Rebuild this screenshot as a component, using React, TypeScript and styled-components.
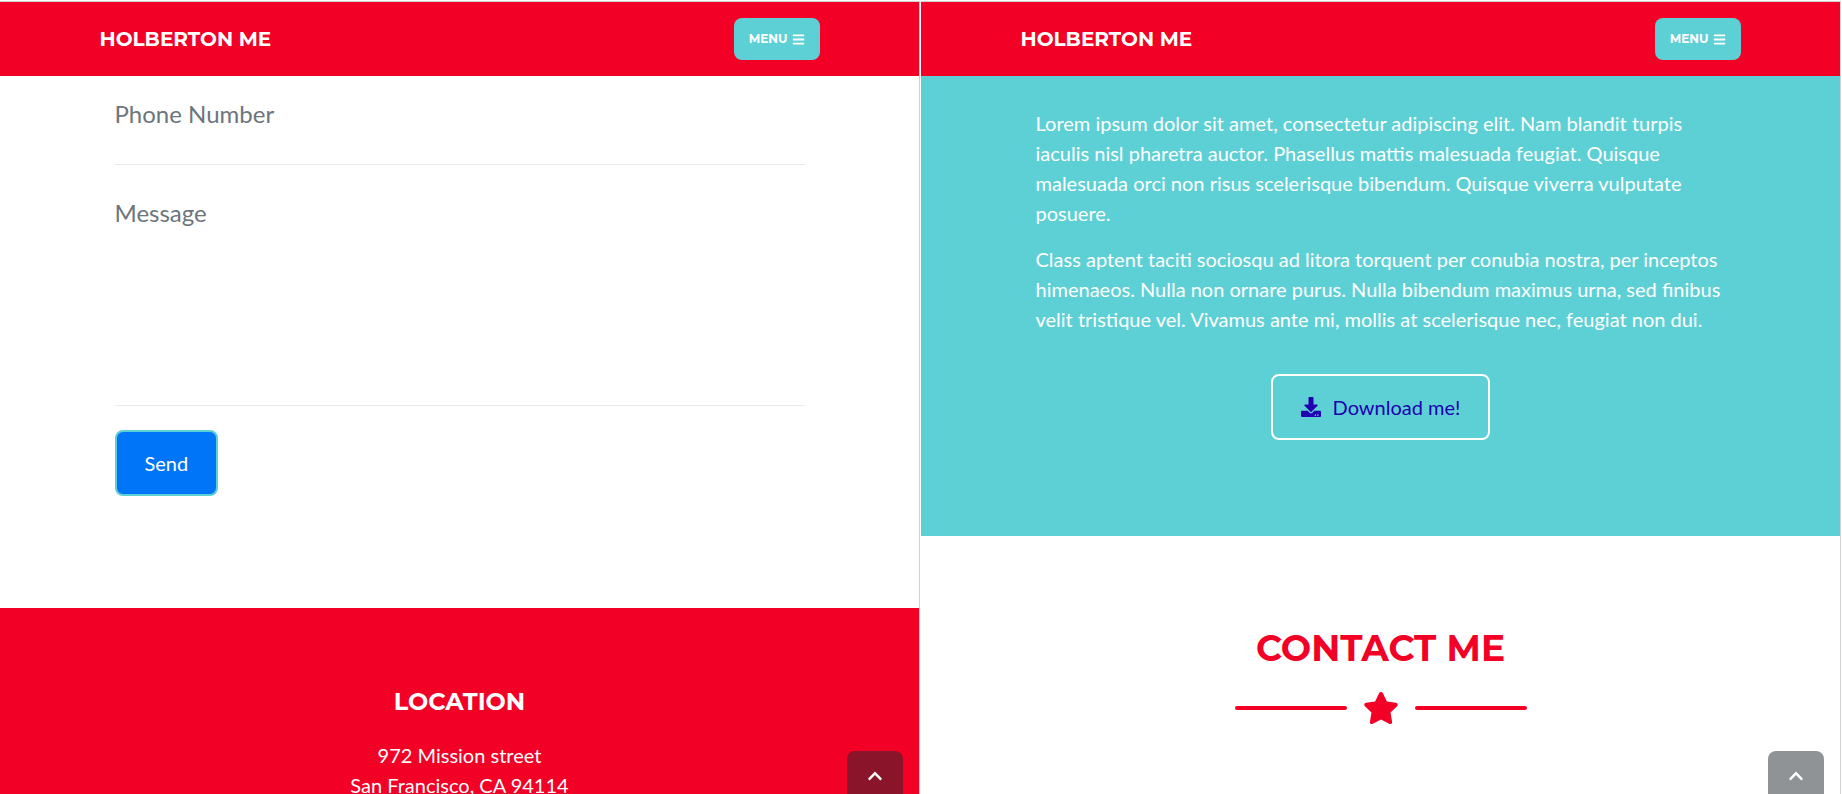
import React from 'react';
import styled, { createGlobalStyle, css } from 'styled-components';
import { FaBars, FaChevronUp, FaDownload, FaStar } from 'react-icons/fa';

const red = '#f20026';
const teal = '#5dd0d6';
const edge = '#cfd3d6';
const heading = "Montserrat, Inter, 'Liberation Sans', sans-serif";
const body = "Lato, 'Liberation Sans', sans-serif";

const GlobalStyle = createGlobalStyle`
  *, *::before, *::after { box-sizing: border-box; }
  body {
    margin: 0;
    background: #fff;
    font-family: ${body};
    font-size: 20px;
    line-height: 30px;
  }
  h2, h3, p { margin: 0; }
`;

const Page = styled.div`
  display: grid;
  grid-template-columns: 1fr 1fr;
  height: 100vh;
  padding-top: 1px;
  overflow: hidden;
`;

const Pane = styled.div`
  position: relative;
  display: flex;
  flex-direction: column;
  margin-right: 1px;
  border-top: 1px solid ${edge};
  border-right: 1px solid ${edge};
  overflow: hidden;
`;

const Container = styled.div`
  width: 100%;
  max-width: 720px;
  margin: 0 auto;
`;

const Content = styled(Container)`
  padding: 0 15px;
`;

const Header = styled.header`
  flex: none;
  padding: 16px 0;
  background: ${red};
`;

const HeaderRow = styled(Container)`
  display: flex;
  align-items: center;
  justify-content: space-between;
`;

const Brand = styled.a`
  color: #fff;
  font: 700 20px/42px ${heading};
  text-decoration: none;
`;

const MenuButton = styled.button`
  display: flex;
  align-items: center;
  gap: 4px;
  height: 42px;
  padding: 0 15px;
  border: 0;
  border-radius: 8px;
  background: ${teal};
  color: #fff;
  font: 700 12px/20px ${heading};
`;

const FormSection = styled.section`
  flex: none;
  padding: 20px 0 112px;
`;

const fieldStyle = css`
  display: block;
  width: 100%;
  border: 0;
  border-bottom: 1px solid #e9ecef;
  border-radius: 0;
  background: transparent;
  color: #212529;
  font: 400 24px/36px ${body};
  outline: 0;
  &::placeholder { color: #6c757d; opacity: 1; }
`;

const TextField = styled.input`
  ${fieldStyle}
  height: 69px;
  padding: 0 0 34px;
`;

const MessageField = styled.textarea`
  ${fieldStyle}
  height: 241px;
  padding: 30px 0 0;
  margin-bottom: 24px;
  resize: none;
`;

const SendButton = styled.button`
  height: 66px;
  padding: 0 28px;
  border: 2px solid ${teal};
  border-radius: 8px;
  background: #0075f8;
  color: #fff;
  font: 400 20px/30px ${body};
`;

const Footer = styled.footer`
  flex: 1 0 auto;
  padding: 78px 0 80px;
  background: ${red};
  color: #fff;
  text-align: center;
`;

const FooterTitle = styled.h3`
  margin-bottom: 22px;
  font: 700 24px/32px ${heading};
`;

const About = styled.section`
  flex: none;
  padding: 32px 0 96px;
  background: ${teal};
  color: #fff;
`;

const Paragraph = styled.p`
  margin-bottom: 16px;
`;

const DownloadRow = styled.div`
  display: flex;
  justify-content: center;
  padding-top: 24px;
`;

const DownloadLink = styled.a`
  display: flex;
  align-items: center;
  gap: 12px;
  height: 66px;
  padding: 0 28px;
  border: 2px solid #fff;
  border-radius: 8px;
  color: #2000b0;
  text-decoration: none;
`;

const Contact = styled.section`
  flex: none;
  padding: 88px 0;
  color: ${red};
  text-align: center;
`;

const ContactTitle = styled.h2`
  font: 700 36px/48px ${heading};
`;

const Divider = styled.div`
  display: flex;
  align-items: center;
  justify-content: center;
  gap: 16px;
  margin-top: 18px;
`;

const DividerLine = styled.span`
  width: 112px;
  height: 4px;
  border-radius: 4px;
  background: ${red};
`;

const ToTop = styled.a`
  position: absolute;
  right: 16px;
  bottom: -7px;
  display: flex;
  align-items: center;
  justify-content: center;
  width: 56px;
  height: 50px;
  border-radius: 8px;
  background: rgba(33, 40, 46, 0.5);
  color: #fff;
`;

function SiteHeader() {
  return (
    <Header>
      <HeaderRow>
        <Brand href="#top">HOLBERTON ME</Brand>
        <MenuButton type="button">
          MENU <FaBars size={13} aria-hidden />
        </MenuButton>
      </HeaderRow>
    </Header>
  );
}

function BackToTop() {
  return (
    <ToTop href="#top" aria-label="Back to top">
      <FaChevronUp size={16} />
    </ToTop>
  );
}

export default function App() {
  return (
    <>
      <GlobalStyle />
      <Page>
        <Pane>
          <SiteHeader />
          <FormSection>
            <Content as="form">
              <TextField type="tel" placeholder="Phone Number" aria-label="Phone Number" />
              <MessageField placeholder="Message" aria-label="Message" />
              <SendButton type="button">Send</SendButton>
            </Content>
          </FormSection>
          <Footer>
            <FooterTitle>LOCATION</FooterTitle>
            <p>
              972 Mission street
              <br />
              San Francisco, CA 94114
            </p>
          </Footer>
          <BackToTop />
        </Pane>
        <Pane>
          <SiteHeader />
          <About>
            <Content>
              <Paragraph>
                Lorem ipsum dolor sit amet, consectetur adipiscing elit. Nam blandit turpis iaculis
                nisl pharetra auctor. Phasellus mattis malesuada feugiat. Quisque malesuada orci non
                risus scelerisque bibendum. Quisque viverra vulputate posuere.
              </Paragraph>
              <Paragraph>
                Class aptent taciti sociosqu ad litora torquent per conubia nostra, per inceptos
                himenaeos. Nulla non ornare purus. Nulla bibendum maximus urna, sed finibus velit
                tristique vel. Vivamus ante mi, mollis at scelerisque nec, feugiat non dui.
              </Paragraph>
              <DownloadRow>
                <DownloadLink href="#download">
                  <FaDownload size={20} aria-hidden />
                  Download me!
                </DownloadLink>
              </DownloadRow>
            </Content>
          </About>
          <Contact>
            <ContactTitle>CONTACT ME</ContactTitle>
            <Divider>
              <DividerLine />
              <FaStar size={36} aria-hidden />
              <DividerLine />
            </Divider>
          </Contact>
          <BackToTop />
        </Pane>
      </Page>
    </>
  );
}
